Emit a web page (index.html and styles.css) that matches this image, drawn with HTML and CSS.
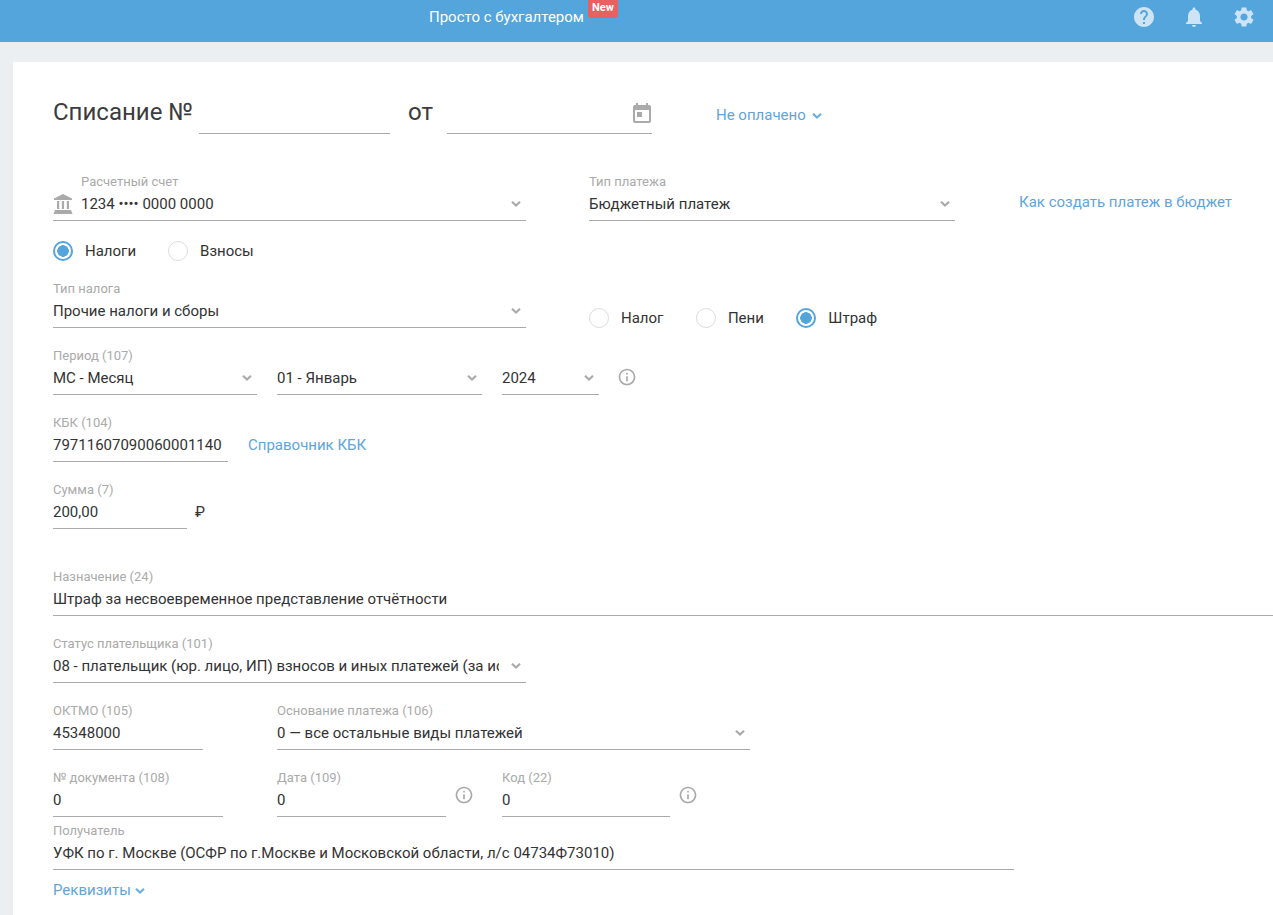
FILE: index.html
```html
<!DOCTYPE html>
<html lang="ru">
<head>
<meta charset="utf-8">
<title>Списание</title>
<link rel="stylesheet" href="styles.css">
</head>
<body>
<svg class="defs" width="0" height="0" aria-hidden="true">
  <symbol id="chev" viewBox="0 0 12 8"><path d="M2 1.800 6 5.600l4-3.800" fill="none" stroke="currentColor" stroke-width="2.200"/></symbol>
  <symbol id="info" viewBox="0 0 24 24"><path d="M11 7h2v2h-2zm0 4h2v6h-2zm1-9C6.48 2 2 6.48 2 12s4.48 10 10 10 10-4.48 10-10S17.52 2 12 2zm0 18c-4.41 0-8-3.59-8-8s3.59-8 8-8 8 3.59 8 8-3.59 8-8 8z" fill="currentColor"/></symbol>
</svg>
<header class="topbar">
  <span class="topbar-title">Просто с бухгалтером</span>
  <span class="badge">New</span>
  <div class="topbar-icons">
    <svg class="top-icon" viewBox="0 0 24 24"><path fill="currentColor" d="M12 2C6.48 2 2 6.48 2 12s4.48 10 10 10 10-4.48 10-10S17.52 2 12 2zm1 17h-2v-2h2v2zm2.07-7.75l-.9.92C13.45 12.9 13 13.5 13 15h-2v-.5c0-1.1.45-2.1 1.17-2.83l1.24-1.26c.37-.36.59-.86.59-1.41 0-1.1-.9-2-2-2s-2 .9-2 2H8c0-2.21 1.79-4 4-4s4 1.79 4 4c0 .88-.36 1.68-.93 2.25z"/></svg>
    <svg class="top-icon" viewBox="0 0 24 24"><path fill="currentColor" d="M12 22c1.1 0 2-.9 2-2h-4c0 1.1.89 2 2 2zm6-6v-5c0-3.07-1.64-5.64-4.5-6.32V4c0-.83-.67-1.5-1.5-1.5s-1.5.67-1.5 1.5v.68C7.63 5.36 6 7.92 6 11v5l-2 2v1h16v-1l-2-2z"/></svg>
    <svg class="top-icon" viewBox="0 0 24 24"><path fill="currentColor" d="M19.14 12.94c.04-.3.06-.61.06-.94 0-.32-.02-.64-.07-.94l2.03-1.58c.18-.14.23-.41.12-.61l-1.92-3.32c-.12-.22-.37-.29-.59-.22l-2.39.96c-.5-.38-1.03-.7-1.62-.94l-.36-2.54c-.04-.24-.24-.41-.48-.41h-3.84c-.24 0-.43.17-.47.41l-.36 2.54c-.59.24-1.13.57-1.62.94l-2.39-.96c-.22-.08-.47 0-.59.22L2.74 8.87c-.12.21-.08.47.12.61l2.03 1.58c-.05.3-.09.63-.09.94s.02.64.07.94l-2.03 1.58c-.18.14-.23.41-.12.61l1.92 3.32c.12.22.37.29.59.22l2.39-.96c.5.38 1.03.7 1.62.94l.36 2.54c.05.24.24.41.48.41h3.84c.24 0 .44-.17.47-.41l.36-2.54c.59-.24 1.13-.56 1.62-.94l2.39.96c.22.08.47 0 .59-.22l1.92-3.32c.12-.22.07-.47-.12-.61l-2.01-1.58zM12 15.6c-1.98 0-3.6-1.62-3.6-3.6s1.62-3.6 3.6-3.6 3.6 1.62 3.6 3.6-1.62 3.6-3.6 3.6z"/></svg>
  </div>
</header>
<main class="card">
  <div class="title-row">
    <h1 class="title">Списание №</h1>
    <div class="title-input w-number"></div>
    <span class="title title-from">от</span>
    <div class="title-input w-date">
      <svg class="cal" viewBox="0 0 24 24"><path fill="currentColor" fill-rule="evenodd" d="M19 3h-1V1h-2v2H8V1H6v2H5c-1.11 0-1.99.9-1.99 2L3 19c0 1.1.89 2 2 2h14c1.1 0 2-.9 2-2V5c0-1.1-.9-2-2-2zm0 16H5V8h14v11zM7 10h5v5H7z"/></svg>
    </div>
    <a class="link status">Не оплачено <svg class="chev"><use href="#chev"/></svg></a>
  </div>

  <div class="row">
    <div class="field w-473 with-icon">
      <div class="label label-indent">Расчетный счет</div>
      <div class="control">
        <svg class="bank" viewBox="0 0 20 20"><path fill="currentColor" d="M10 0 1 4.500V6h18V4.500zM4 7h2.200v8H4zM8.900 7h2.200v8H8.900zM13.800 7H16v8h-2.200zM2 16h16l1.500 4H.5z"/></svg>
        <span class="val">1234 •••• 0000 0000</span>
        <svg class="chev"><use href="#chev"/></svg>
      </div>
    </div>
    <div class="field w-366 gap-63">
      <div class="label">Тип платежа</div>
      <div class="control"><span class="val">Бюджетный платеж</span><svg class="chev"><use href="#chev"/></svg></div>
    </div>
    <a class="link budget-link">Как создать платеж в бюджет</a>
  </div>

  <div class="radios radios-main">
    <label class="radio on"><i class="dot"></i>Налоги</label>
    <label class="radio"><i class="dot"></i>Взносы</label>
  </div>

  <div class="row row-tax">
    <div class="field w-473">
      <div class="label">Тип налога</div>
      <div class="control"><span class="val">Прочие налоги и сборы</span><svg class="chev"><use href="#chev"/></svg></div>
    </div>
    <div class="radios radios-kind">
      <label class="radio"><i class="dot"></i>Налог</label>
      <label class="radio"><i class="dot"></i>Пени</label>
      <label class="radio on"><i class="dot"></i>Штраф</label>
    </div>
  </div>

  <div class="row row-gap">
    <div class="field w-204">
      <div class="label">Период (107)</div>
      <div class="control"><span class="val">МС - Месяц</span><svg class="chev"><use href="#chev"/></svg></div>
    </div>
    <div class="field w-205">
      <div class="label">&nbsp;</div>
      <div class="control"><span class="val">01 - Январь</span><svg class="chev"><use href="#chev"/></svg></div>
    </div>
    <div class="field w-97">
      <div class="label">&nbsp;</div>
      <div class="control"><span class="val">2024</span><svg class="chev"><use href="#chev"/></svg></div>
    </div>
    <svg class="info info-period"><use href="#info"/></svg>
  </div>

  <div class="row row-gap">
    <div class="field w-175">
      <div class="label">КБК (104)</div>
      <div class="control"><span class="val">79711607090060001140</span></div>
    </div>
    <a class="link kbk-link">Справочник КБК</a>
  </div>

  <div class="row">
    <div class="field w-134">
      <div class="label">Сумма (7)</div>
      <div class="control"><span class="val">200,00</span></div>
    </div>
    <span class="rub">₽</span>
  </div>

  <div class="row row-purpose">
    <div class="field w-full">
      <div class="label">Назначение (24)</div>
      <div class="control"><span class="val">Штраф за несвоевременное представление отчётности</span></div>
    </div>
  </div>

  <div class="row">
    <div class="field w-473">
      <div class="label">Статус плательщика (101)</div>
      <div class="control"><span class="val val-clip">08 - плательщик (юр. лицо, ИП) взносов и иных платежей (за исключением налогов)</span><svg class="chev"><use href="#chev"/></svg></div>
    </div>
  </div>

  <div class="row row-oktmo">
    <div class="field w-150">
      <div class="label">ОКТМО (105)</div>
      <div class="control"><span class="val">45348000</span></div>
    </div>
    <div class="field w-473">
      <div class="label">Основание платежа (106)</div>
      <div class="control"><span class="val">0 — все остальные виды платежей</span><svg class="chev"><use href="#chev"/></svg></div>
    </div>
  </div>

  <div class="row row-doc">
    <div class="field w-170">
      <div class="label">№ документа (108)</div>
      <div class="control"><span class="val">0</span></div>
    </div>
    <div class="field w-169 ml-54">
      <div class="label">Дата (109)</div>
      <div class="control"><span class="val">0</span></div>
    </div>
    <svg class="info info-doc"><use href="#info"/></svg>
    <div class="field w-168 ml-28">
      <div class="label">Код (22)</div>
      <div class="control"><span class="val">0</span></div>
    </div>
    <svg class="info info-doc"><use href="#info"/></svg>
  </div>

  <div class="row row-recipient">
    <div class="field w-961">
      <div class="label">Получатель</div>
      <div class="control"><span class="val">УФК по г. Москве (ОСФР по г.Москве и Московской области, л/с 04734Ф73010)</span></div>
    </div>
  </div>

  <a class="link details">Реквизиты <svg class="chev"><use href="#chev"/></svg></a>
</main>
</body>
</html>
```

FILE: styles.css
```css
* { box-sizing: border-box; }
html, body { margin: 0; height: 100%; }
body {
  background: #ebeff2;
  font-family: Roboto, "Noto Sans", sans-serif;
  color: #333;
  overflow: hidden;
}
.defs { position: absolute; }

.topbar {
  height: 42px;
  background: #53a5dc;
  display: flex;
  align-items: flex-start;
  padding-left: 429px;
  color: #fff;
}
.topbar-title { font-size: 15px; line-height: 34px; }
.badge {
  margin-left: 4px;
  width: 30px;
  height: 18px;
  background: #e8605f;
  border-radius: 0 0 3px 3px;
  font-size: 11px;
  font-weight: 700;
  line-height: 16px;
  text-align: center;
}
.topbar-icons {
  margin-left: auto;
  display: flex;
  gap: 26px;
  padding: 5px 17px 0 0;
  color: #cde4f6;
}
.top-icon { width: 24px; height: 24px; display: block; }

.card {
  margin: 20px 0 0 13px;
  height: 853px;
  background: #fff;
  padding: 0 0 0 40px;
  overflow: hidden;
}

.title-row { display: flex; align-items: flex-end; height: 72px; width: 1300px; }
.title { font-size: 24px; font-weight: 400; margin: 0; line-height: 30px; padding-bottom: 7px; color: #3c3c3c; }
.title-input {
  height: 38px;
  border-bottom: 1px solid #aaa;
  display: flex;
  justify-content: flex-end;
  align-items: flex-start;
}
.w-number { width: 191px; margin-left: 6px; }
.title-from { margin-left: 18px; }
.w-date { width: 205px; margin-left: 14px; }
.cal { width: 24px; height: 24px; color: #aaa; margin: 6px -2px 0 0; }
.status { margin-left: 64px; padding-bottom: 10px; }

.link { color: #5fa5dc; font-size: 15px; }
.chev { width: 12px; height: 8px; color: #aaa; flex: none; }
.link .chev { color: #6cb0dc; margin-left: 2px; }

.row { display: flex; margin-top: 20px; align-items: flex-start; width: 1300px; }
.title-row + .row { margin-top: 40px; }
.row-gap { gap: 20px; }
.row-tax { margin-top: 0; }
.row-purpose { margin-top: 40px; }
.row-oktmo { gap: 74px; }
.row-recipient { margin-top: 6px; }

.field { height: 47px; flex: none; }
.label { font-size: 13px; line-height: 16px; color: #aaa; white-space: nowrap; }
.label-indent { padding-left: 28px; }
.control {
  height: 31px;
  border-bottom: 1px solid #aaa;
  display: flex;
  align-items: center;
  padding-bottom: 2px;
  padding-right: 4px;
}
.val {
  flex: 1;
  font-size: 15px;
  line-height: 20px;
  white-space: nowrap;
  min-width: 0;
}
.val-clip { overflow: hidden; margin-right: 11px; }
.bank { width: 20px; height: 20px; color: #aaa; margin-right: 8px; flex: none; }

.w-473 { width: 473px; }
.w-366 { width: 366px; }
.w-204 { width: 204px; }
.w-205 { width: 205px; }
.w-97 { width: 97px; }
.w-175 { width: 175px; }
.w-134 { width: 134px; }
.w-full { width: 1260px; }
.w-150 { width: 150px; }
.w-170 { width: 170px; }
.w-169 { width: 169px; }
.w-168 { width: 168px; }
.w-961 { width: 961px; }
.gap-63 { margin-left: 63px; }
.ml-54 { margin-left: 54px; }
.ml-28 { margin-left: 28px; }

.budget-link { margin: 19px 0 0 64px; line-height: 18px; }
.kbk-link { margin-top: 21px; line-height: 18px; }
.rub { margin: 21px 0 0 8px; font-size: 15px; line-height: 18px; }
.info { width: 20px; height: 20px; color: #aaa; flex: none; }
.info-period { margin: 19px 0 0 -2px; }
.info-doc { margin: 15px 0 0 8px; }

.radios { display: flex; }
.radios-main { gap: 32px; margin: 20px 0; }
.radios-kind { gap: 32.5px; margin: 27px 0 0 63px; }
.radio { display: flex; align-items: center; gap: 12px; font-size: 15px; line-height: 20px; }
.dot {
  width: 20px;
  height: 20px;
  border-radius: 50%;
  border: 1px solid #ddd;
  flex: none;
}
.radio.on .dot {
  border: 2px solid #53a5dc;
  background: radial-gradient(circle, #53a5dc 0 5.500px, #fff 6px);
}
.details { display: block; margin-top: 10px; line-height: 20px; }
.details .chev { margin-left: -1px; }
```
